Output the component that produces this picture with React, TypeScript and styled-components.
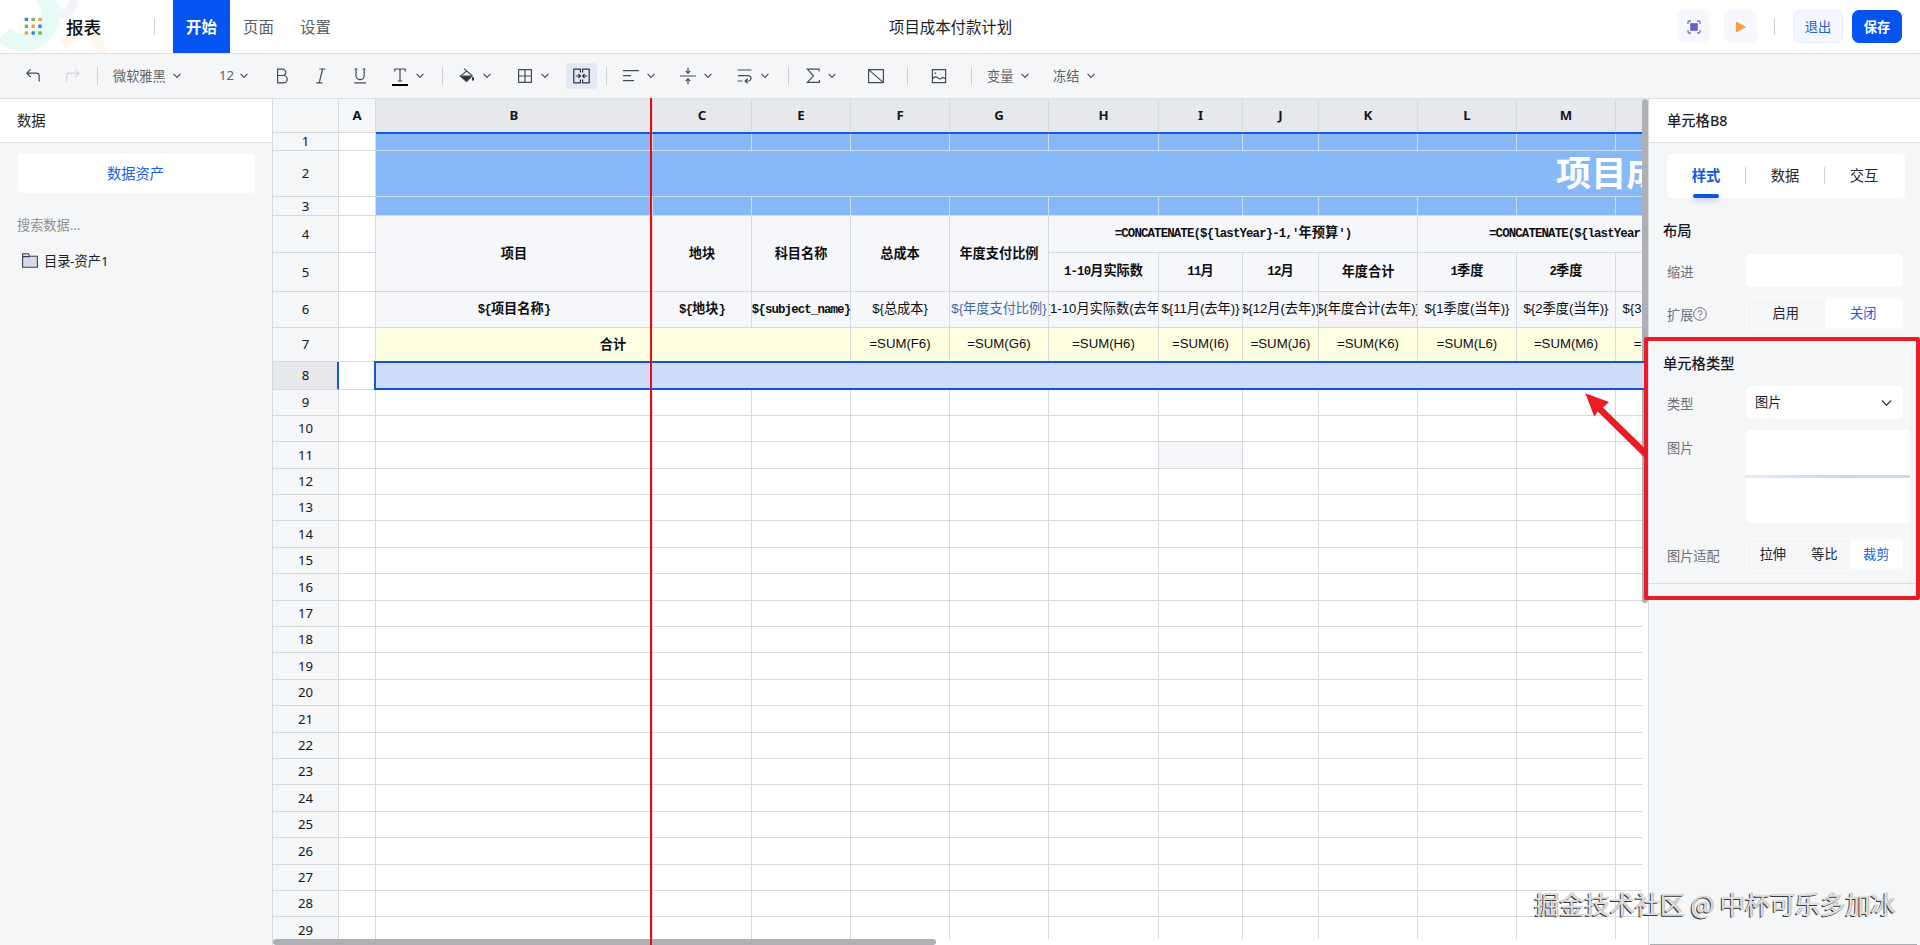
import React from "react";
import styled, { createGlobalStyle, css } from "styled-components";

const GlobalStyle = createGlobalStyle`
  * {
    box-sizing: border-box;
  }

  body {
    margin: 0;
    overflow: hidden;
    background: #fff;
    font-family: "Noto Sans", "Noto Sans CJK SC", sans-serif;
    font-size: 13.2px;
    color: #1b1e25;
  }
`;

const BLUE = "#0553f1";
const LINE = "#d7dadd";

const Page = styled.div`
  position: relative;
  display: flex;
  flex-direction: column;
  width: 1920px;
  height: 945px;
  overflow: hidden;
`;

/* ---------- header ---------- */

const Header = styled.header`
  position: relative;
  display: flex;
  align-items: center;
  flex: none;
  height: 54px;
  border-bottom: 1px solid #dcdfe3;
  background: #fff;
`;

const LogoGlow = styled.svg`
  position: absolute;
  left: 0;
  top: 0;
`;

const Brand = styled.div`
  position: relative;
  display: flex;
  align-items: center;
  width: 154px;
  padding-left: 24px;
  gap: 23px;
  font-family: "Noto Sans CJK SC", sans-serif;
  font-size: 17.6px;
  font-weight: 500;
  color: #101216;
`;

const VLine = styled.div<{ $gap?: number; $height?: number }>`
  flex: none;
  width: 1px;
  height: ${(p) => p.$height ?? 18}px;
  margin-left: ${(p) => p.$gap ?? 0}px;
  background: #cdd0d4;
`;

const Nav = styled.nav`
  display: flex;
  height: 53px;
  margin-left: 18px;
  font-family: "Noto Sans CJK SC", sans-serif;
  font-size: 15.4px;
`;

const NavItem = styled.div<{ $active?: boolean }>`
  display: flex;
  align-items: center;
  justify-content: center;
  width: 57px;
  padding-bottom: 2px;
  color: #5b5e64;
  ${(p) =>
    p.$active &&
    css`
      background: ${BLUE};
      color: #fff;
      font-weight: 700;
    `}
`;

const DocTitle = styled.div`
  margin-left: 545px;
  width: 124px;
  padding-bottom: 2px;
  white-space: nowrap;
  font-family: "Noto Sans CJK SC", sans-serif;
  font-size: 15.4px;
  color: #1b1e25;
`;

const Actions = styled.div`
  display: flex;
  align-items: center;
  margin-left: auto;
  margin-right: 18px;
`;

const IconButton = styled.div`
  display: flex;
  align-items: center;
  justify-content: center;
  width: 33px;
  height: 33px;
  margin-right: 14px;
  border-radius: 6px;
  background: #f7f8fe;
`;

const Button = styled.div<{ $primary?: boolean }>`
  display: flex;
  align-items: center;
  justify-content: center;
  width: 50px;
  height: 33px;
  margin-left: ${(p) => (p.$primary ? 9 : 18)}px;
  border: 1px solid ${(p) => (p.$primary ? BLUE : "#e9eefa")};
  border-radius: 7px;
  background: ${(p) => (p.$primary ? BLUE : "#f3f6ff")};
  color: ${(p) => (p.$primary ? "#fff" : "#2a5bd7")};
  font-family: "Noto Sans CJK SC", sans-serif;
  font-weight: ${(p) => (p.$primary ? 700 : 400)};
`;

/* ---------- toolbar ---------- */

const Toolbar = styled.div`
  display: flex;
  align-items: center;
  flex: none;
  height: 45px;
  border-bottom: 1px solid #dcdfe3;
  background: #f4f6f8;
`;

const ToolIcon = styled.svg<{ $gap: number }>`
  flex: none;
  margin-left: ${(p) => p.$gap}px;
  overflow: visible;
  fill: none;
  stroke: #464a53;
  stroke-width: 1.2;
`;

const ToolText = styled.div<{ $gap: number; $width: number }>`
  flex: none;
  width: ${(p) => p.$width}px;
  margin-left: ${(p) => p.$gap}px;
  padding-bottom: 2px;
  white-space: nowrap;
  color: #5f6268;
`;

const ActiveTool = styled.div`
  display: flex;
  align-items: center;
  justify-content: center;
  width: 31px;
  height: 26px;
  margin-left: 17px;
  border-radius: 3px;
  background: #e3e9f5;
`;

/* ---------- body ---------- */

const Body = styled.div`
  display: flex;
  flex: 1;
  min-height: 0;
`;

const PanelTitle = styled.div<{ $pad: number; $strong?: boolean }>`
  display: flex;
  align-items: center;
  height: 44px;
  padding: 0 0 2px ${(p) => p.$pad}px;
  border-bottom: 1px solid #dcdfe3;
  background: #fff;
  font-size: 14.3px;
  font-weight: ${(p) => (p.$strong ? 500 : 400)};
`;

const LeftPanel = styled.aside`
  flex: none;
  width: 273px;
  border-right: 1px solid ${LINE};
  background: #f4f6f8;
`;

const AssetTab = styled.div`
  display: flex;
  align-items: center;
  justify-content: center;
  width: 237px;
  height: 39px;
  margin: 11px 0 0 18px;
  padding: 0 2px 3px 0;
  border-radius: 4px;
  background: #fff;
  font-size: 14.3px;
  color: #1a5fe0;
`;

const SearchHint = styled.div`
  margin: 22px 0 0 17px;
  line-height: 20px;
  color: #8d9095;
`;

const FolderRow = styled.div`
  display: flex;
  align-items: center;
  gap: 6px;
  height: 20px;
  margin: 15px 0 0 22px;
`;

const SheetArea = styled.main`
  position: relative;
  flex: none;
  width: 1375px;
  background: #fff;
`;

const SheetClip = styled.div`
  width: 1369px;
  height: 840px;
  overflow: hidden;
`;

const ROW_HEIGHTS = [34, 18, 46, 19, 37, 39, 36, 34, 28, 26];
for (let n = 10; n <= 29; n++) {
  const edge = (row: number) => Math.floor(415.3 + 26.4 * (row - 9));
  ROW_HEIGHTS.push(edge(n) - edge(n - 1));
}

const Sheet = styled.div`
  display: grid;
  width: max-content;
  grid-template-columns: 66px 37px 277px repeat(4, 99px) 110px 84px 76px repeat(4, 99px);
  grid-template-rows: ${ROW_HEIGHTS.map((h) => `${h}px`).join(" ")};
`;

const HeadCell = styled.div<{ $selected?: boolean; $row?: boolean }>`
  display: flex;
  align-items: center;
  justify-content: center;
  min-height: 0;
  padding-bottom: 1px;
  line-height: 16px;
  border-right: 1px solid ${LINE};
  border-bottom: 1px solid ${LINE};
  background: ${(p) => (p.$selected ? "#e6e8eb" : "#f4f6f8")};
  font-weight: ${(p) => (p.$row ? 400 : 700)};
  color: #14161b;
  ${(p) =>
    p.$selected &&
    !p.$row &&
    css`
      position: relative;
      border-bottom-color: #1159d6;
      box-shadow: 0 1px 0 #1159d6;
    `}
  ${(p) =>
    p.$selected &&
    p.$row &&
    css`
      position: relative;
      border-right-color: #1159d6;
      box-shadow: -1px 0 0 #1159d6 inset;
    `}
`;

type Tone = "plain" | "banner" | "head" | "total" | "faint" | "warm";

const TONES: Record<Tone, [string, string]> = {
  plain: ["#fff", LINE],
  banner: ["#87b9f8", "#c6e0f2"],
  head: ["#f5f7fb", LINE],
  total: ["#feffe1", LINE],
  faint: ["#f4f6fa", LINE],
  warm: ["#f5f3f4", LINE],
};

const Cell = styled.div<{
  $area: string;
  $tone: Tone;
  $color?: string;
  $indent?: number;
}>`
  grid-area: ${(p) => p.$area};
  display: flex;
  align-items: center;
  justify-content: ${(p) => (p.$indent ? "flex-start" : "center")};
  min-width: 0;
  padding: 0 0 2px ${(p) => p.$indent ?? 0}px;
  overflow: hidden;
  border-right: 1px solid ${(p) => TONES[p.$tone][1]};
  border-bottom: 1px solid ${(p) => TONES[p.$tone][1]};
  background: ${(p) => TONES[p.$tone][0]};
  color: ${(p) => p.$color ?? "#0d0e11"};
  font-family: "Liberation Sans", "Noto Sans CJK SC", sans-serif;
  line-height: 18px;
  white-space: nowrap;
`;

const BoldText = styled.span`
  flex: none;
  font-family: "Noto Sans CJK SC", sans-serif;
  font-weight: 700;
`;

const MonoRun = styled.span`
  font-family: "Liberation Mono", monospace;
  font-size: 12.4px;
  letter-spacing: -0.87px;
`;

const Clipped = styled.span`
  flex: none;
`;

const BannerTitle = styled.span`
  flex: none;
  padding-bottom: 3px;
  font-family: "Noto Sans CJK SC", sans-serif;
  font-size: 35.2px;
  font-weight: 700;
  line-height: 40px;
  color: #fff;
`;

const Selection = styled.div`
  position: absolute;
  left: 101px;
  top: 262px;
  width: 1271px;
  height: 29px;
  border: 2px solid #1057d8;
  border-right: 0;
  background: #cedcf9;
`;

const VerticalThumb = styled.div`
  position: absolute;
  right: 0;
  top: 0;
  width: 6px;
  height: 504px;
  border-radius: 3px;
  background: #aeb0b5;
`;

const HorizontalThumb = styled.div`
  position: absolute;
  left: 0;
  bottom: 0;
  width: 663px;
  height: 6px;
  border-radius: 3px;
  background: #aeb0b5;
`;

const FreezeLine = styled.div`
  position: absolute;
  left: 377px;
  top: -1px;
  width: 2px;
  height: 847px;
  background: #f0080c;
`;

/* ---------- right panel ---------- */

const RightPanel = styled.aside`
  flex: 1;
  border-left: 1px solid ${LINE};
  background: #f4f6f8;
`;

const Tabs = styled.div`
  display: flex;
  align-items: center;
  width: 238px;
  height: 44px;
  margin: 11px 0 0 18px;
  padding: 0 2px 1px 0;
  border-radius: 4px;
  background: #fff;
`;

const Tab = styled.div<{ $active?: boolean }>`
  position: relative;
  flex: 1;
  padding-bottom: 2px;
  text-align: center;
  font-size: 14.3px;
  font-weight: ${(p) => (p.$active ? 600 : 400)};
  color: ${(p) => (p.$active ? "#0f58e0" : "#24272d")};
  ${(p) =>
    p.$active &&
    css`
      &::after {
        content: "";
        position: absolute;
        left: 26px;
        bottom: -11px;
        width: 26px;
        height: 4px;
        border-radius: 2px;
        background: #0f55dc;
        box-shadow: 0 3px 5px rgba(60, 90, 230, 0.25);
      }
    `}
`;

const SectionTitle = styled.div<{ $top: number }>`
  margin: ${(p) => p.$top}px 0 0 14px;
  line-height: 20px;
  font-size: 14.3px;
  font-weight: 500;
  color: #15171c;
`;

const Field = styled.div<{ $top: number; $height?: number }>`
  display: flex;
  align-items: flex-start;
  height: ${(p) => p.$height ?? 33}px;
  margin: ${(p) => p.$top}px 0 0 18px;
`;

const Label = styled.div`
  display: flex;
  align-items: center;
  flex: none;
  width: 79px;
  height: 34px;
  color: #6d7076;
`;

const Box = styled.div<{ $width?: number; $height?: number }>`
  display: flex;
  align-items: center;
  justify-content: space-between;
  width: ${(p) => p.$width ?? 157}px;
  height: ${(p) => p.$height ?? 33}px;
  padding: 0 11px 0 9px;
  border-radius: 5px;
  background: #fff;
`;

const BoxValue = styled.span`
  padding-bottom: 2px;
`;

const Upload = styled(Box)`
  flex-direction: column;
  justify-content: center;
`;

const UploadLine = styled.div`
  flex: none;
  width: 165px;
  height: 3px;
  background: linear-gradient(90deg, #e3edf8, #c3d8f2 60%, #c9dcf3);
`;

const Segments = styled.div`
  display: flex;
  width: 157px;
  height: 33px;
  padding: 1px 0;
  border: 1px solid #fdfdfe;
  border-radius: 3px;
`;

const Segment = styled.div<{ $active?: boolean }>`
  display: flex;
  align-items: center;
  justify-content: center;
  flex: 1;
  padding-bottom: 2px;
  border-radius: 3px;
  background: ${(p) => (p.$active ? "#fff" : "transparent")};
  color: ${(p) => (p.$active ? "#1a5fe0" : "#24272d")};
`;

const SectionRule = styled.div`
  height: 1px;
  margin-top: 12px;
  background: #dcdfe2;
`;

/* ---------- annotations ---------- */

const RedFrame = styled.div`
  position: absolute;
  left: 1644px;
  top: 337px;
  width: 276px;
  height: 263px;
  border: 4px solid #ec1c26;
  border-radius: 2px;
`;

const Arrow = styled.svg`
  position: absolute;
  left: 1580px;
  top: 388px;
`;

const Watermark = styled.div`
  position: absolute;
  left: 1534px;
  top: 885px;
  white-space: nowrap;
  font-family: "Noto Sans CJK SC", sans-serif;
  font-size: 25.1px;
  line-height: 36px;
  color: #dedede;
  text-shadow:
    -1px 1px 0 #38393b,
    1px 0 1px #b4b5b7;
`;

const BottomEdge = styled.div`
  position: absolute;
  left: 1650px;
  bottom: 0;
  width: 267px;
  height: 1px;
  background: #a9acb1;
`;

const Chevron = ({ gap }: { gap: number }) => (
  <ToolIcon $gap={gap} width="8" height="16" viewBox="0 0 8 16">
    <path d="M0.6 5.8 4 9.4 7.4 5.8" strokeWidth="1.1" />
  </ToolIcon>
);

const Tool = ({ gap, d, children }: { gap: number; d?: string; children?: React.ReactNode }) => (
  <ToolIcon $gap={gap} width="16" height="16" viewBox="0 0 16 16">
    {d && <path d={d} />}
    {children}
  </ToolIcon>
);

const DOTS = ["#3f7fe8", "#6dbb4a", "#f0a044", "#6dbb4a", "#f0a044", "#3f7fe8", "#f0a044", "#3f7fe8", "#6dbb4a"];

const Logo = () => (
  <svg width="19" height="19" viewBox="0 0 19 19">
    {DOTS.map((fill, i) => (
      <rect
        key={i}
        x={0.7 + (i % 3) * 6.8}
        y={0.7 + Math.floor(i / 3) * 6.8}
        width="3.4"
        height="3.4"
        rx="0.6"
        fill={fill}
      />
    ))}
  </svg>
);

const Bold = ({ text }: { text: string }) => (
  <BoldText>
    {text
      .split(/([\x20-\x7e]+)/)
      .filter(Boolean)
      .map((run, i) => (/^[\x20-\x7e]/.test(run) ? <MonoRun key={i}>{run}</MonoRun> : run))}
  </BoldText>
);

const COLUMNS = ["A", "B", "C", "E", "F", "G", "H", "I", "J", "K", "L", "M", ""];

// grid column of a data column, the row header being the first one
const col = (index: number) => index + 2;

const area = (row: number, index: number, rowSpan = 1, colSpan = 1) =>
  `${row + 1} / ${col(index)} / span ${rowSpan} / span ${colSpan}`;

type BoldCell = [number, number, number, number, string];

const BOLD_CELLS: BoldCell[] = [
  [4, 1, 2, 1, "项目"],
  [4, 2, 2, 1, "地块"],
  [4, 3, 2, 1, "科目名称"],
  [4, 4, 2, 1, "总成本"],
  [4, 5, 2, 1, "年度支付比例"],
  [4, 6, 1, 4, "=CONCATENATE(${lastYear}-1,'年预算')"],
  [5, 6, 1, 1, "1-10月实际数"],
  [5, 7, 1, 1, "11月"],
  [5, 8, 1, 1, "12月"],
  [5, 9, 1, 1, "年度合计"],
  [5, 10, 1, 1, "1季度"],
  [5, 11, 1, 1, "2季度"],
  [5, 12, 1, 1, ""],
  [6, 1, 1, 1, "${项目名称}"],
  [6, 2, 1, 1, "${地块}"],
  [6, 3, 1, 1, "${subject_name}"],
];

const FORMULAS = [
  "${总成本}",
  "${年度支付比例}",
  "${1-10月实际数(去年)}",
  "${11月(去年)}",
  "${12月(去年)}",
  "${年度合计(去年)}",
  "${1季度(当年)}",
  "${2季度(当年)}",
  "${3季度(当年)}",
];

const Spreadsheet = () => {
  const blanks: [number, number][] = [];
  for (let row = 8; row <= 29; row++) {
    for (let c = 1; c < COLUMNS.length; c++) blanks.push([row, c]);
  }

  return (
    <SheetArea>
      <SheetClip>
        <Sheet>
          <HeadCell />
          {COLUMNS.map((name, i) => (
            <HeadCell key={i} $selected={i > 0}>
              {name}
            </HeadCell>
          ))}
          {ROW_HEIGHTS.slice(1).map((_, i) => (
            <React.Fragment key={i}>
              <HeadCell $row $selected={i === 7} style={{ gridRow: i + 2, gridColumn: 1 }}>
                {i + 1}
              </HeadCell>
              <Cell $area={area(i + 1, 0)} $tone="plain" />
            </React.Fragment>
          ))}
          {[1, 3].map((row) =>
            COLUMNS.slice(1).map((_, i) => (
              <Cell key={`${row}-${i}`} $area={area(row, i + 1)} $tone="banner" />
            )),
          )}
          <Cell $area={area(2, 1, 1, 12)} $tone="banner" $indent={1180}>
            <BannerTitle>项目成</BannerTitle>
          </Cell>
          {BOLD_CELLS.map(([row, c, rows, cols, text]) => (
            <Cell key={`${row}-${c}`} $area={area(row, c, rows, cols)} $tone="head">
              <Bold text={text} />
            </Cell>
          ))}
          <Cell $area={area(4, 10, 1, 3)} $tone="head" $indent={71}>
            <Bold text="=CONCATENATE(${lastYear" />
          </Cell>
          {FORMULAS.map((text, i) => (
            <Cell
              key={text}
              $area={area(6, i + 4)}
              $tone={i === 5 ? "warm" : "head"}
              $color={i === 1 ? "#3f6ba3" : undefined}
            >
              <Clipped>{text}</Clipped>
            </Cell>
          ))}
          <Cell $area={area(7, 1, 1, 3)} $tone="total">
            <Bold text="合计" />
          </Cell>
          {[..."FGHIJKLMN"].map((letter, i) => (
            <Cell key={letter} $area={area(7, i + 4)} $tone="total">
              =SUM({letter}6)
            </Cell>
          ))}
          {blanks.map(([row, c]) => (
            <Cell
              key={`${row}-${c}`}
              $area={area(row, c)}
              $tone={row === 11 && c === 7 ? "faint" : "plain"}
            />
          ))}
        </Sheet>
      </SheetClip>
      <VerticalThumb />
      <Selection />
      <HorizontalThumb />
      <FreezeLine />
    </SheetArea>
  );
};

const TopBar = () => (
  <Header>
    <LogoGlow width="120" height="53" viewBox="0 0 120 53">
      <path d="M43-4A23 23 0 0 1 4 34" fill="none" stroke="#e8faf5" strokeWidth="18" />
      <path d="M74-2A14 14 0 0 1 56 13" fill="none" stroke="#f3f4fc" strokeWidth="9" />
      <path d="M62 44Q98 22 101 53" fill="none" stroke="#fef7ee" strokeWidth="10" />
    </LogoGlow>
    <Brand>
      <Logo />
      报表
    </Brand>
    <VLine $height={17} />
    <Nav>
      <NavItem $active>开始</NavItem>
      <NavItem>页面</NavItem>
      <NavItem>设置</NavItem>
    </Nav>
    <DocTitle>项目成本付款计划</DocTitle>
    <Actions>
      <IconButton>
        <svg width="14" height="14" viewBox="0 0 14 14" fill="none" stroke="#7a6cd0" strokeWidth="1.3">
          <rect x="3.2" y="3.2" width="7.6" height="7.6" fill="#6a5ccb" stroke="none" />
          <path d="M1 4V2.2Q1 1 2.2 1H4M10 1h1.8Q13 1 13 2.2V4M13 10v1.8Q13 13 11.8 13H10M4 13H2.2Q1 13 1 11.8V10" />
        </svg>
      </IconButton>
      <IconButton>
        <svg width="12" height="12" viewBox="0 0 12 12">
          <path d="M1.5 1.2V10.8L10.5 6Z" fill="#f5a142" stroke="#f5a142" strokeLinejoin="round" />
        </svg>
      </IconButton>
      <VLine $height={17} $gap={3} />
      <Button>退出</Button>
      <Button $primary>保存</Button>
    </Actions>
  </Header>
);

const ToolRow = () => (
  <Toolbar>
    <Tool gap={25} d="M5.6 1.4 1.8 5.2 5.6 9M2.2 5.2H11.4Q14.2 5.2 14.2 8V13.6" />
    <ToolIcon $gap={24} width="16" height="16" viewBox="0 0 16 16" opacity="0.18">
      <path d="M10.2 1.4 14 5.2 10.2 9M13.6 5.2H4.4Q1.6 5.2 1.6 8V13.6" />
    </ToolIcon>
    <VLine $gap={16} />
    <ToolText $gap={15} $width={53}>微软雅黑</ToolText>
    <Chevron gap={7} />
    <ToolText $gap={38} $width={14}>12</ToolText>
    <Chevron gap={7} />
    <Tool gap={26} d="M3 1.2H8.6A3.1 3.1 0 0 1 8.6 7.5H3.4M8.6 7.5H9.6A3.5 3.5 0 0 1 9.6 14.8H3M3.6 1.2V14.8" />
    <Tool gap={23} d="M6.4 1H12.4M9.6 1 6.2 14.8M3.2 14.8H9.4" />
    <Tool gap={23} d="M2.6 1H5.6M10.6 1H13.6M4 1V7.6A4.1 4.1 0 0 0 12.2 7.6V1M2.2 14.8H14" />
    <Tool gap={24} d="M2.8 3.6V1H13.2V3.6M8 1V13M5.8 13H10.2">
      <path d="M0 17H16" stroke="#000" strokeWidth="2" />
    </Tool>
    <Chevron gap={8} />
    <VLine $gap={18} />
    <Tool gap={16}>
      <path d="M5 0.6 13 7.6 7.6 13.2 1.6 8.2 7.8 2.6" />
      <path d="M1.6 8H12.8L7.6 13.4Z" fill="#2b303b" />
      <path d="M14 9.2V12.4" strokeWidth="2" stroke="#2b303b" />
    </Tool>
    <Chevron gap={8} />
    <Tool gap={26} d="M1.6 1.6H14.4V14.4H1.6ZM8 1.6V14.4M1.6 8H14.4" />
    <Chevron gap={8} />
    <ActiveTool>
      <ToolIcon $gap={0} width="17" height="16" viewBox="0 0 17 16">
        <path
          d="M7.4 4.6V1.2H0.8V14.8H7.4V11.4M9.6 4.6V1.2H16.2V14.8H9.6V11.4M2.8 8H7M5.4 6 7.4 8 5.4 10M14.2 8H10M11.6 6 9.6 8 11.6 10"
          stroke="#2f3642"
        />
      </ToolIcon>
    </ActiveTool>
    <VLine $gap={9} />
    <Tool gap={16} d="M0 2.6H16M0 7.6H8M0 12.6H11" />
    <Chevron gap={8} />
    <Tool gap={25} d="M0 8H16M8-.4V5M5.8 3 8 5.2 10.2 3M8 16.4V11M5.8 13 8 10.8 10.2 13" />
    <Chevron gap={8} />
    <Tool gap={25} d="M0.6 2H14.4M1 7.6H12A2.8 2.8 0 0 1 12 13H8.4M10.6 10.8 8.2 13 10.6 15.2M0.6 13H5.4" />
    <Chevron gap={8} />
    <VLine $gap={19} />
    <Tool gap={16} d="M14 3.6V1.2H2.4L8.4 7.8 2.4 14.4H14.4V12" />
    <Chevron gap={7} />
    <Tool gap={32} d="M0.6 1.6H15.4V14.6H0.6ZM0.6 1.6 15.4 14.6" />
    <VLine $gap={23} />
    <Tool gap={23} d="M1.4 1.6H14.6V14.6H1.4ZM1.4 10.6Q4.6 7.4 7 9.8T11.4 9.4L14.6 10.6M4.4 4.4V6M3.6 5.2H5.2" />
    <VLine $gap={24} />
    <ToolText $gap={15} $width={27}>变量</ToolText>
    <Chevron gap={7} />
    <ToolText $gap={24} $width={27}>冻结</ToolText>
    <Chevron gap={7} />
  </Toolbar>
);

const CellSettings = () => (
  <RightPanel>
    <PanelTitle $pad={18} $strong>
      单元格B8
    </PanelTitle>
    <Tabs>
      <Tab $active>样式</Tab>
      <VLine $height={17} />
      <Tab>数据</Tab>
      <VLine $height={17} />
      <Tab>交互</Tab>
    </Tabs>
    <SectionTitle $top={23}>布局</SectionTitle>
    <Field $top={13}>
      <Label>缩进</Label>
      <Box />
    </Field>
    <Field $top={10}>
      <Label>
        扩展
        <svg width="14" height="14" viewBox="0 0 14 14" fill="none" stroke="#6d7076">
          <circle cx="7" cy="7" r="6.3" />
          <path d="M5 5.6A2 2 0 1 1 7 7.6V8.8M7 10V11.2" />
        </svg>
      </Label>
      <Segments>
        <Segment>启用</Segment>
        <Segment $active>关闭</Segment>
      </Segments>
    </Field>
    <SectionTitle $top={24}>单元格类型</SectionTitle>
    <Field $top={12}>
      <Label>类型</Label>
      <Box>
        <BoxValue>图片</BoxValue>
        <svg width="11" height="8" viewBox="0 0 11 8" fill="none" stroke="#3b3f47" strokeWidth="1.3">
          <path d="M1 1.5 5.5 6.2 10 1.5" />
        </svg>
      </Box>
    </Field>
    <Field $top={11} $height={93}>
      <Label>图片</Label>
      <Upload $width={165} $height={93}>
        <UploadLine />
      </Upload>
    </Field>
    <Field $top={15}>
      <Label>图片适配</Label>
      <Segments>
        <Segment>拉伸</Segment>
        <Segment>等比</Segment>
        <Segment $active>裁剪</Segment>
      </Segments>
    </Field>
    <SectionRule />
  </RightPanel>
);

const App: React.FC = () => (
  <Page>
    <GlobalStyle />
    <TopBar />
    <ToolRow />
    <Body>
      <LeftPanel>
        <PanelTitle $pad={17}>数据</PanelTitle>
        <AssetTab>数据资产</AssetTab>
        <SearchHint>搜索数据...</SearchHint>
        <FolderRow>
          <svg width="16" height="15" viewBox="0 0 16 15" fill="#d9d9e8" stroke="#3b3d4e" strokeWidth="1.1">
            <path d="M0.6 14.2V0.8H6.2L7.8 3.2H15.4V14.2ZM0.6 3.6H8" />
          </svg>
          目录-资产1
        </FolderRow>
      </LeftPanel>
      <Spreadsheet />
      <CellSettings />
    </Body>
    <BottomEdge />
    <Arrow width="70" height="72" viewBox="0 0 70 72">
      <path d="M5.3 5.3 29 14 23 19.4 66 61.6V71L17.6 23.4 14.3 28.7Z" fill="#ec1c26" />
    </Arrow>
    <RedFrame />
    <Watermark>掘金技术社区 @ 中杯可乐多加冰</Watermark>
  </Page>
);

export default App;
